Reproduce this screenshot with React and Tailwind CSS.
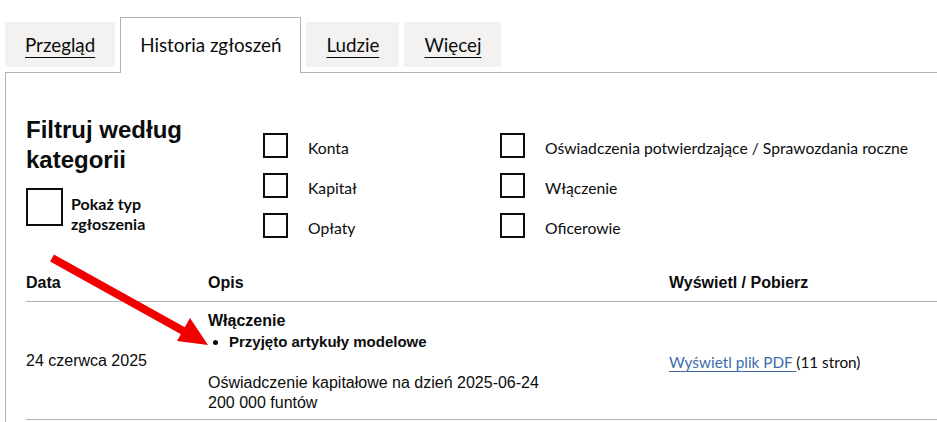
import React from 'react';

const tabs = [
    { label: 'Przegląd', active: false },
    { label: 'Historia zgłoszeń', active: true },
    { label: 'Ludzie', active: false },
    { label: 'Więcej', active: false },
];

const leftFilters = ['Konta', 'Kapitał', 'Opłaty'];
const rightFilters = ['Oświadczenia potwierdzające / Sprawozdania roczne', 'Włączenie', 'Oficerowie'];

const FilterRow = ({ label }) => (
    <label className="flex items-center gap-5 h-[25px]">
        <span className="block w-[25px] h-[25px] border-2 border-[#0b0c0c] shrink-0" />
        <span className="pt-[5px] text-[15.7px] leading-5 whitespace-nowrap">{label}</span>
    </label>
);

const Arrow = () => (
    <svg className="absolute left-0 top-0 pointer-events-none" width="937" height="422" viewBox="0 0 937 422">
        <line x1="52" y1="258" x2="187" y2="333" stroke="#f00000" strokeWidth="8" />
        <polygon points="208,345 177,341 190,318" fill="#f00000" />
    </svg>
);

const App = () => {
    return (
        <div className="relative h-[422px] overflow-hidden bg-white text-[#0b0c0c] font-['Lato',sans-serif]">
            {/* Tabs */}
            <ul className="flex items-start pt-[22px] pl-[5px]">
                {tabs.map((tab) =>
                    tab.active ? (
                        <li
                            key={tab.label}
                            className="relative z-10 -mt-[5px] -mb-px mr-[5px] px-[19px] pt-[14px] pb-[16px] bg-white border border-b-0 border-[#b1b4b6] text-[18.8px] leading-[25px]"
                        >
                            {tab.label}
                        </li>
                    ) : (
                        <li
                            key={tab.label}
                            className="mr-[5px] px-5 py-[10px] bg-[#f3f2f1] text-[18.8px] leading-[25px] underline underline-offset-[5px] decoration-1"
                        >
                            {tab.label}
                        </li>
                    )
                )}
            </ul>

            {/* Panel */}
            <div className="ml-[5px] w-[960px] border border-[#b1b4b6] pt-[42px] px-5 pb-8">
                <div className="flex">
                    <div className="w-[237px] shrink-0">
                        <h2 className="font-['Liberation_Sans',Arial,sans-serif] font-bold text-[24px] leading-[30px]">
                            Filtruj według
                            <br />
                            kategorii
                        </h2>
                        <label className="mt-[13px] flex items-start gap-2">
                            <span className="block w-[37px] h-[38px] border-2 border-[#0b0c0c] shrink-0" />
                            <span className="mt-[6px] font-bold text-[16px] leading-5">
                                Pokaż typ
                                <br />
                                zgłoszenia
                            </span>
                        </label>
                    </div>
                    <div className="w-[237px] shrink-0 pt-[18px] flex flex-col gap-[15px]">
                        {leftFilters.map((f) => (
                            <FilterRow key={f} label={f} />
                        ))}
                    </div>
                    <div className="pt-[18px] flex flex-col gap-[15px]">
                        {rightFilters.map((f) => (
                            <FilterRow key={f} label={f} />
                        ))}
                    </div>
                </div>

                {/* Filing history table */}
                <div className="mt-[23px] grid grid-cols-[182px_461px_1fr] font-['Liberation_Sans',Arial,sans-serif] text-[16px] leading-5">
                    <div className="pt-[12px] pb-[8px] font-bold border-b border-[#b1b4b6]">Data</div>
                    <div className="pt-[12px] pb-[8px] font-bold border-b border-[#b1b4b6]">Opis</div>
                    <div className="pt-[12px] pb-[8px] font-bold border-b border-[#b1b4b6]">Wyświetl / Pobierz</div>

                    <div className="flex items-center border-b border-[#b1b4b6]">24 czerwca 2025</div>
                    <div className="pt-[9px] pb-[6px] border-b border-[#b1b4b6]">
                        <p className="font-bold">Włączenie</p>
                        <ul className="list-disc pl-[21px] mb-[21px] font-bold text-[15px] leading-[21px]">
                            <li>Przyjęto artykuły modelowe</li>
                        </ul>
                        <p>Oświadczenie kapitałowe na dzień 2025-06-24</p>
                        <p>200 000 funtów</p>
                    </div>
                    <div className="flex items-center pt-[2px] border-b border-[#b1b4b6] font-['Lato',sans-serif] text-[15.3px]">
                        <span>
                            <a href="#" className="text-[#3d6cad] underline underline-offset-[3px] decoration-1">
                                Wyświetl plik PDF{' '}
                            </a>
                            (11 stron)
                        </span>
                    </div>
                </div>
            </div>

            <Arrow />
        </div>
    );
};

export default App;
